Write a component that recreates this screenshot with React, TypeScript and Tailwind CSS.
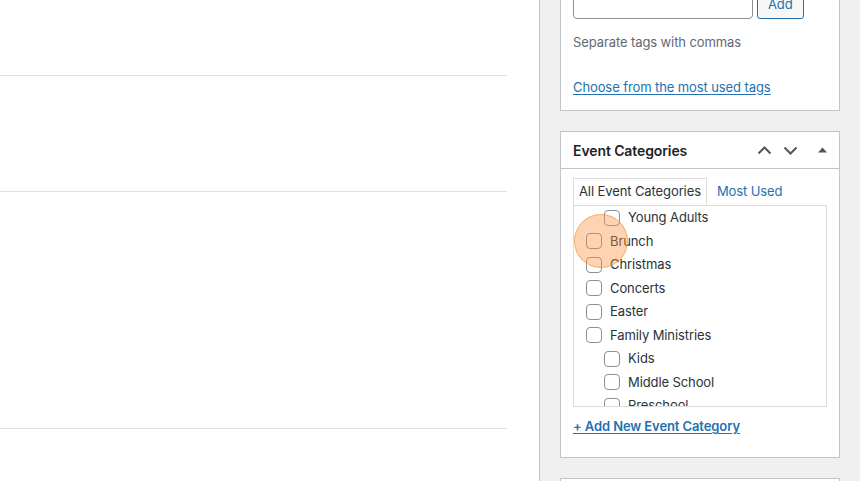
import React from 'react';

type Cat = { label: string; child?: boolean };

const categories: Cat[] = [
  { label: 'Young Adults', child: true },
  { label: 'Brunch' },
  { label: 'Christmas' },
  { label: 'Concerts' },
  { label: 'Easter' },
  { label: 'Family Ministries' },
  { label: 'Kids', child: true },
  { label: 'Middle School', child: true },
  { label: 'Preschool', child: true },
];

const font = { fontFamily: 'Inter, "Noto Sans", sans-serif' };

const Checkbox: React.FC = () => (
  <span className="block w-[16px] h-[16px] shrink-0 rounded-[4px] border border-[#8c8f94] bg-white" />
);

const App: React.FC = () => {
  return (
    <div className="w-[860px] h-[481px] overflow-hidden flex bg-[#f0f0f1] text-[13px] text-[#2c3338]" style={font}>
      {/* Main editor column */}
      <main className="w-[540px] h-full bg-white border-r border-[#c3c4c7] shrink-0">
        <div className="w-[507px]">
          <div className="h-[76px] border-b border-[#e0e0e0]" />
          <div className="h-[116px] border-b border-[#e0e0e0]" />
          <div className="h-[237px] border-b border-[#e0e0e0]" />
        </div>
      </main>

      {/* Sidebar */}
      <aside className="flex-1 px-[20px] tracking-[-0.1px]">
        {/* Tags box (scrolled) */}
        <section className="-mt-[20px] bg-white border border-[#c3c4c7] px-[12px] pt-[8px] pb-[13px]">
          <div className="flex items-center gap-[4px]">
            <div className="w-[180px] h-[30px] rounded-[4px] border border-[#8c8f94] bg-white" />
            <button className="h-[30px] px-[10px] rounded-[3px] border border-[#2271b1] bg-[#f6f7f7] text-[#2271b1] text-[13px] leading-none">
              Add
            </button>
          </div>
          <p className="mt-[14px] leading-[19.5px] text-[#646970]">Separate tags with commas</p>
          <p className="mt-[25px] leading-[19.5px]">
            <a className="text-[#2271b1] underline underline-offset-2">Choose from the most used tags</a>
          </p>
        </section>

        {/* Event Categories box */}
        <section className="mt-[20px] bg-white border border-[#c3c4c7]">
          <header className="h-[37px] border-b border-[#c3c4c7] flex items-center pl-[12px] pr-[8px]">
            <h2 className="flex-1 text-[14px] font-semibold text-[#1d2327]">Event Categories</h2>
            <div className="flex items-center text-[#50575e]">
              <span className="w-[26px] h-[24px] flex items-center justify-center">
                <svg width="15" height="9" viewBox="0 0 15 9" fill="none">
                  <polyline points="1.5,7.5 7.5,1.5 13.5,7.5" stroke="currentColor" strokeWidth="2" />
                </svg>
              </span>
              <span className="w-[26px] h-[24px] flex items-center justify-center">
                <svg width="15" height="9" viewBox="0 0 15 9" fill="none">
                  <polyline points="1.5,1.5 7.5,7.5 13.5,1.5" stroke="currentColor" strokeWidth="2" />
                </svg>
              </span>
              <span className="ml-[10px] w-[18px] h-[24px] flex items-center justify-center">
                <svg width="9" height="6" viewBox="0 0 9 6">
                  <polygon points="0,5.5 4.5,0.5 9,5.5" fill="currentColor" />
                </svg>
              </span>
            </div>
          </header>

          <div className="px-[12px] pt-[9px] pb-[20px]">
            <div className="flex items-end h-[27px]">
              <div className="h-[27px] px-[5px] flex items-center border border-b-0 border-[#dcdcde] bg-white text-[#2c3338]">
                All Event Categories
              </div>
              <a className="ml-[10px] h-[27px] flex items-center text-[#2271b1]">Most Used</a>
            </div>
            <div className="relative h-[202px] border border-[#dcdcde] overflow-hidden">
              <ul>
                {categories.map((c) => (
                  <li
                    key={c.label}
                    className={`h-[23.5px] flex items-center gap-[8px] ${c.child ? 'pl-[30px]' : 'pl-[12px]'}`}
                  >
                    <Checkbox />
                    <span className="leading-none">{c.label}</span>
                  </li>
                ))}
              </ul>
              {/* click highlight */}
              <span className="absolute left-[0px] top-[8px] w-[54px] h-[54px] rounded-full bg-[rgba(251,146,60,0.4)] border border-[rgba(245,140,50,0.55)]" />
            </div>
            <p className="mt-[10px] leading-[19.5px]">
              <a className="text-[#2271b1] font-semibold underline underline-offset-2">+ Add New Event Category</a>
            </p>
          </div>
        </section>

        <section className="mt-[20px] h-[40px] bg-white border border-[#c3c4c7]" />
      </aside>
    </div>
  );
};

export default App;
